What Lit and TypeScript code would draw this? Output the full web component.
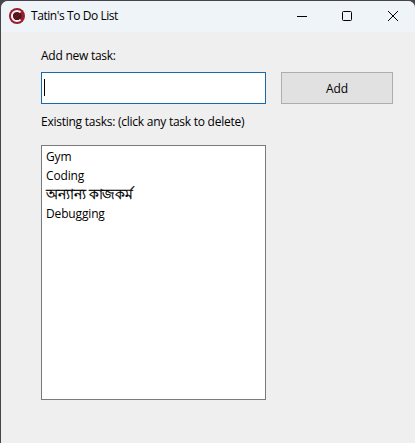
import { LitElement, html, css } from "lit";
import { customElement, state } from "lit/decorators.js";
import { classMap } from "lit/directives/class-map.js";

@customElement("app-root")
export class AppRoot extends LitElement {
  static styles = css`
    :host {
      display: block;
      box-sizing: border-box;
      width: 415px;
      height: 443px;
      padding: 1px 0 0 1px;
      overflow: hidden;
      background: #46454c;
      color: #000;
      font: 12px/16px "Open Sans", "Noto Sans", sans-serif;
      letter-spacing: -0.25px;
    }
    .window {
      display: flex;
      flex-direction: column;
      height: 442px;
      border-radius: 7px 7px 0 0;
      overflow: hidden;
      background: #efefef;
    }
    .titlebar {
      display: flex;
      align-items: center;
      flex: none;
      box-sizing: border-box;
      height: 31px;
      padding: 0 0 1px 8px;
      background: #eff4f9;
    }
    .logo { flex: none; width: 16px; height: 16px; }
    .title { flex: 1; margin-left: 6px; white-space: nowrap; letter-spacing: -0.43px; }
    .control { display: flex; justify-content: center; width: 45px; }
    .control.close { width: 44px; padding-left: 2px; }
    .control svg { flex: none; width: 12px; height: 12px; fill: none; stroke: #000; }
    .content { display: flex; flex-direction: column; padding: 16px 22px 0 40px; }
    .row { display: flex; justify-content: space-between; margin: 8px 0 10px; }
    .label { white-space: nowrap; }
    .field {
      display: flex;
      box-sizing: border-box;
      width: 225px;
      height: 32px;
      padding: 6px 2px;
      border: 1px solid #1569ae;
      background: #fff;
    }
    .caret { width: 1px; height: 17px; background: #000; }
    .add {
      box-sizing: border-box;
      width: 112px;
      height: 32px;
      padding: 1px 0 0;
      border: 1px solid #adadad;
      background: #e1e1e1;
      color: inherit;
      font: inherit;
      letter-spacing: -0.1px;
    }
    .list {
      box-sizing: border-box;
      width: 225px;
      height: 255px;
      margin: 15px 0 0;
      padding: 1px 4px;
      border: 1px solid #7a7a7a;
      background: #fff;
      list-style: none;
      letter-spacing: -0.15px;
    }
    .task { height: 19px; line-height: 19px; white-space: nowrap; }
    .task.bengali {
      font-size: 13.5px;
      line-height: 18px;
      letter-spacing: -0.15px;
      word-spacing: -0.3px;
      -webkit-text-stroke: 0.3px #000;
    }
  `;

  @state() private tasks = ["Gym", "Coding", "অন্যান্য কাজকর্ম", "Debugging"];

  render() {
    return html`
      <div class="window">
        <header class="titlebar">
          <svg class="logo" viewBox="0 0 16 16">
            <circle cx="8" cy="8" r="8" fill="#991c2b" />
            <circle cx="8" cy="8" r="4.6" fill="#4a151d" />
            <path d="M5 9l4-4M6 11l5-5" stroke="#7c1724" stroke-width="1" />
            <path d="M11.6 4.4A5.1 5.1 0 1 0 11.6 11.6" fill="none" stroke="#f8f2f5" stroke-width="2" />
          </svg>
          <span class="title">Tatin's To Do List</span>
          <span class="control"><svg viewBox="0 0 12 12"><path d="M1 6.5h10" /></svg></span>
          <span class="control"><svg viewBox="0 0 12 12"><rect x="1.5" y="1.5" width="9" height="9" rx="1" /></svg></span>
          <span class="control close"><svg viewBox="0 0 12 12"><path d="M1 1l10 10M11 1L1 11" /></svg></span>
        </header>
        <main class="content">
          <span class="label">Add new task:</span>
          <div class="row">
            <div class="field"><span class="caret"></span></div>
            <button class="add">Add</button>
          </div>
          <span class="label">Existing tasks: (click any task to delete)</span>
          <ul class="list">
            ${this.tasks.map(
              (task, index) => html`<li
                class=${classMap({ task: true, bengali: /[\u0980-\u09ff]/.test(task) })}
                @click=${() => this.remove(index)}
              >${task}</li>`
            )}
          </ul>
        </main>
      </div>
    `;
  }

  private remove(index: number) {
    this.tasks = this.tasks.filter((_, i) => i !== index);
  }
}
